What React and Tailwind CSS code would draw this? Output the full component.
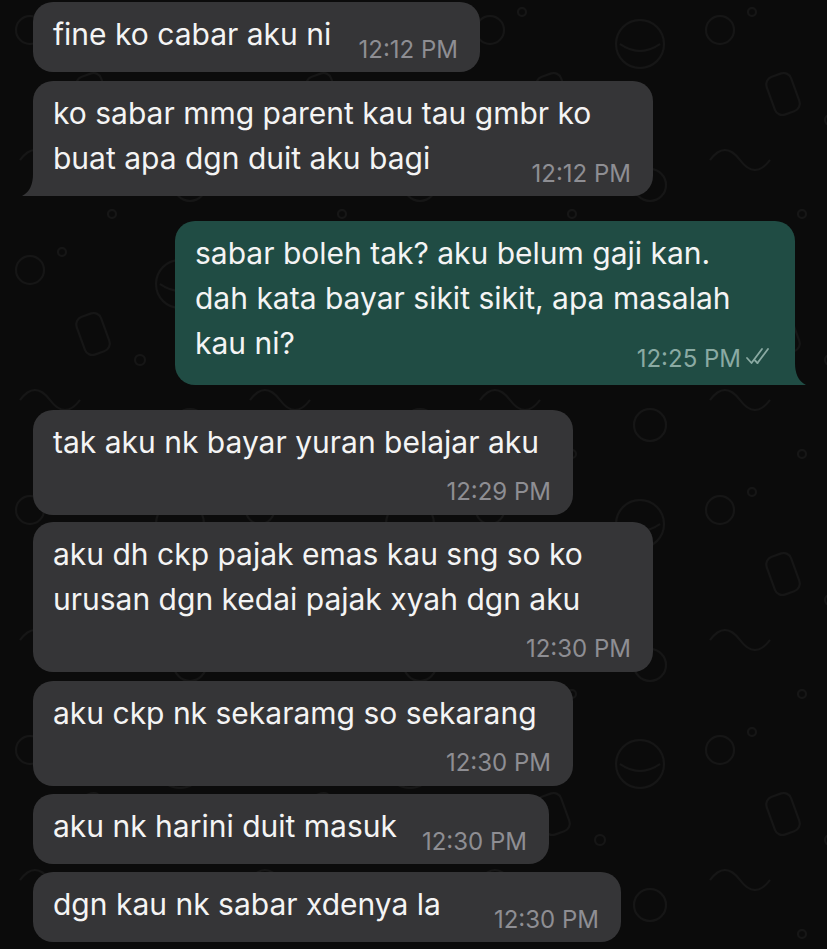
const messages = [
  { id: 1, out: false, w: 447, mt: 2, lines: ["fine ko cabar aku ni"], time: "12:12 PM", inline: true },
  { id: 2, out: false, w: 620, mt: 9, lines: ["ko sabar mmg parent kau tau gmbr ko", "buat apa dgn duit aku bagi"], time: "12:12 PM", inline: true, tail: true },
  { id: 3, out: true, w: 620, mt: 25, lines: ["sabar boleh tak? aku belum gaji kan.", "dah kata bayar sikit sikit, apa masalah", "kau ni?"], time: "12:25 PM", inline: true, tail: true },
  { id: 4, out: false, w: 540, mt: 25, lines: ["tak aku nk bayar yuran belajar aku"], time: "12:29 PM" },
  { id: 5, out: false, w: 620, mt: 7, lines: ["aku dh ckp pajak emas kau sng so ko", "urusan dgn kedai pajak xyah dgn aku"], time: "12:30 PM" },
  { id: 6, out: false, w: 540, mt: 9, lines: ["aku ckp nk sekaramg so sekarang"], time: "12:30 PM" },
  { id: 7, out: false, w: 516, mt: 8, lines: ["aku nk harini duit masuk"], time: "12:30 PM", inline: true },
  { id: 8, out: false, w: 588, mt: 8, lines: ["dgn kau nk sabar xdenya la"], time: "12:30 PM", inline: true },
];

function DoubleCheck() {
  return (
    <svg width="30" height="20" viewBox="0 0 30 20" fill="none" stroke="#8aaaa3" strokeWidth="1.8" strokeLinecap="round" strokeLinejoin="round">
      <path d="M2 12 L6.5 17 L17 3" />
      <path d="M12.5 17 L23 3" />
      <path d="M10 14.5 L12.5 17" />
    </svg>
  );
}

function Tail({ out }) {
  if (out) {
    return (
      <svg className="absolute bottom-0 right-[-11px]" width="22" height="22" viewBox="0 0 22 22">
        <path d="M0 0 H11 C11 10 14 18 22 22 H0 Z" fill="#204c44" />
      </svg>
    );
  }
  return (
    <svg className="absolute bottom-0 left-[-11px]" width="22" height="22" viewBox="0 0 22 22">
      <path d="M22 0 H11 C11 10 8 18 0 22 H22 Z" fill="#353537" />
    </svg>
  );
}

function Bubble({ m }) {
  const timeColor = m.out ? "text-[#8aaaa3]" : "text-[#8e8e93]";
  const time = (
    <span className={`flex shrink-0 items-end gap-[4px] whitespace-nowrap text-[24px] leading-[14px] ${timeColor}`}>
      {m.time}
      {m.out && <DoubleCheck />}
    </span>
  );
  const head = m.inline ? m.lines.slice(0, -1) : m.lines;
  const last = m.lines[m.lines.length - 1];
  return (
    <div
      style={{ width: m.w, marginTop: m.mt }}
      className={[
        "relative shrink-0 rounded-[20px] pt-[10px] pl-[20px]",
        m.out ? "self-end mr-[32px] bg-[#204c44] pr-[20px] pb-[19px]" : "ml-[33px] bg-[#353537] pr-[22px]",
        m.tail ? (m.out ? "rounded-br-none" : "rounded-bl-none") : "",
        m.out ? "" : m.inline ? "pb-[15px]" : "pb-[16px]",
      ].join(" ")}
    >
      <div className="text-[30px] leading-[45px] text-[#f4f4f4]">
        {head.map((l) => (
          <div key={l} className="whitespace-nowrap">{l}</div>
        ))}
        {m.inline && (
          <div className="flex items-end justify-between">
            <span className="whitespace-nowrap">{last}</span>
            {time}
          </div>
        )}
      </div>
      {!m.inline && <div className="mt-[20px] flex justify-end">{time}</div>}
      {m.tail && <Tail out={m.out} />}
    </div>
  );
}

function Wallpaper() {
  return (
    <svg className="absolute inset-0 h-full w-full" aria-hidden="true">
      <defs>
        <pattern id="doodle" width="230" height="240" patternUnits="userSpaceOnUse">
          <g fill="none" stroke="#161616" strokeWidth="2">
            <circle cx="30" cy="30" r="14" />
            <circle cx="62" cy="12" r="4" />
            <circle cx="180" cy="44" r="24" />
            <path d="M160 44 q20 14 40 0" />
            <rect x="80" y="74" width="26" height="40" rx="8" transform="rotate(-20 93 94)" />
            <circle cx="140" cy="120" r="5" />
            <path d="M20 160 q15 -20 30 0 q15 20 30 0" />
            <circle cx="190" cy="185" r="16" />
            <circle cx="112" cy="214" r="4" />
          </g>
        </pattern>
      </defs>
      <rect width="100%" height="100%" fill="url(#doodle)" />
    </svg>
  );
}

export default function App() {
  return (
    <div className="relative h-[949px] w-[827px] overflow-hidden bg-[#0b0b0b] font-['Inter','Liberation_Sans',sans-serif]">
      <Wallpaper />
      <div className="relative flex flex-col">
        {messages.map((m) => (
          <Bubble key={m.id} m={m} />
        ))}
        <div className="ml-[33px] mt-[7px] h-[40px] w-[570px] shrink-0 rounded-[20px] bg-[#353537]" />
      </div>
    </div>
  );
}
